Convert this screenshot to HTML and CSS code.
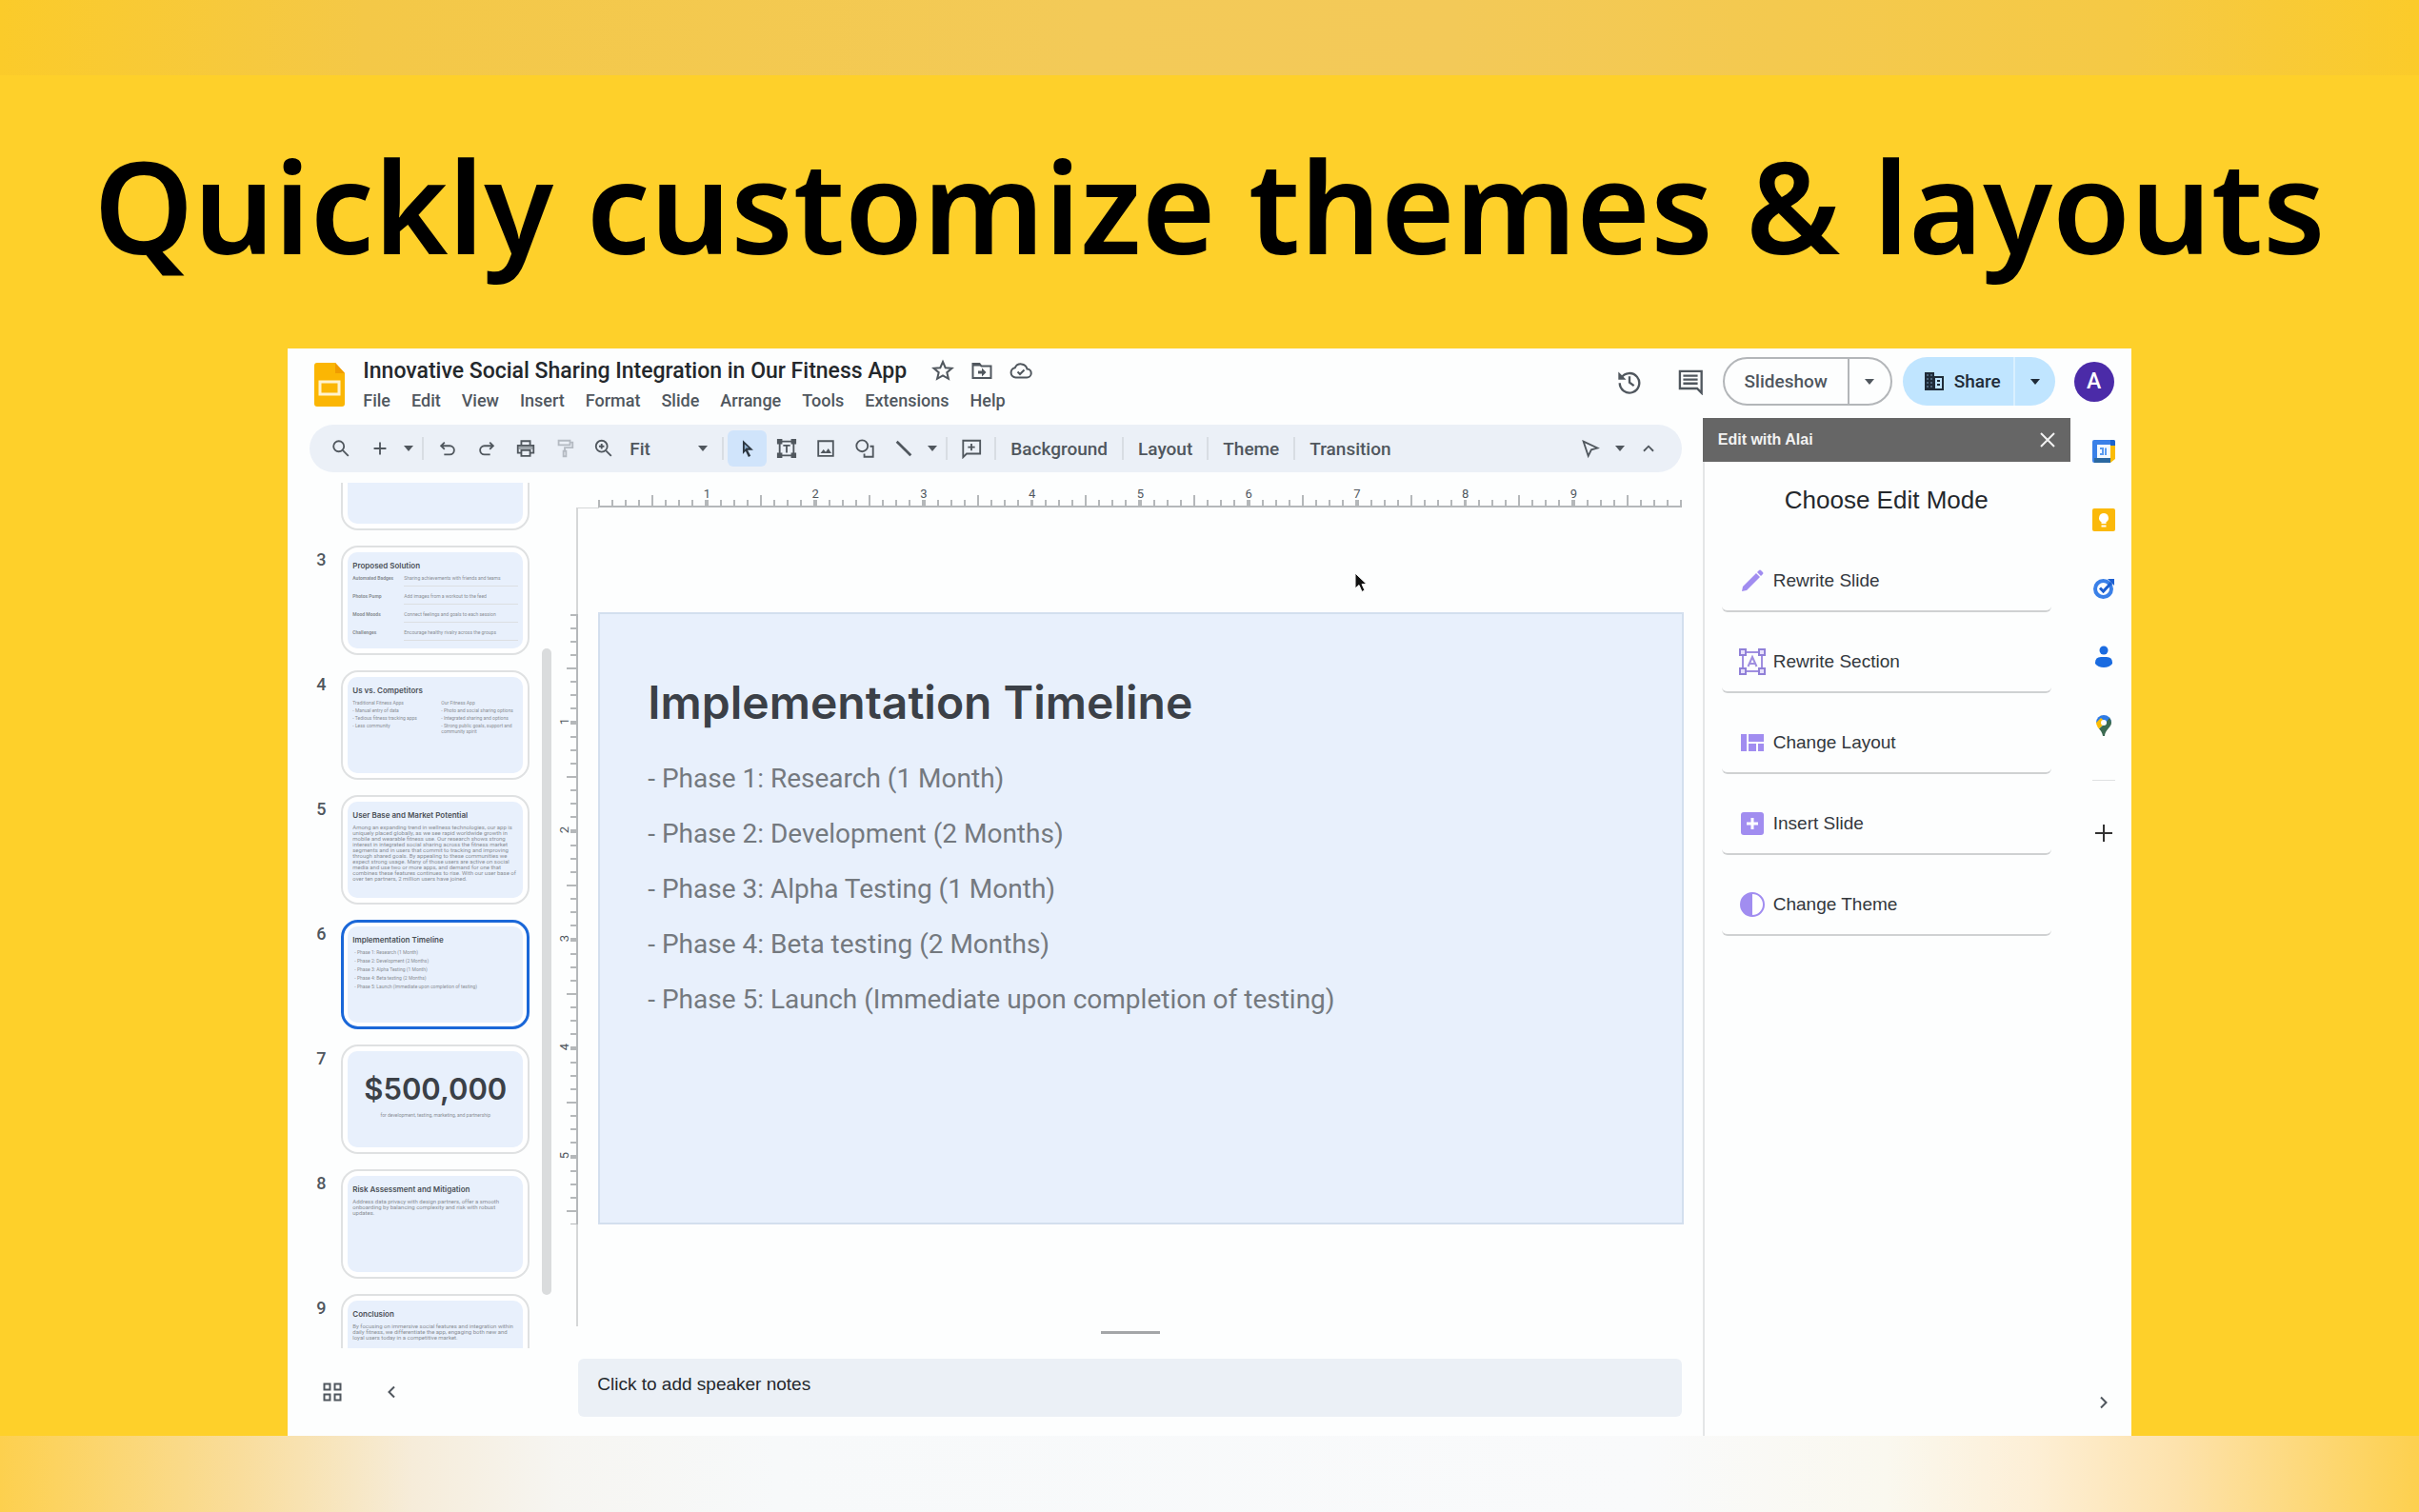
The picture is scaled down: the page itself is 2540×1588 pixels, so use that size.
FILE: index.html
```html
<!DOCTYPE html>
<html lang="en">
<head>
    <meta charset="UTF-8">
    <meta name="viewport" content="width=device-width, initial-scale=1.0">
    <title>Quickly customize themes & layouts</title>
    <link rel="stylesheet" href="styles.css">
</head>
<body>
    <svg class="sprite" aria-hidden="true">
        <symbol id="caret" viewBox="0 0 10 10"><path d="M0 2h10L5 8z" fill="currentColor"/></symbol>
    </svg>

    <div class="band band-top"></div>
    <h1 class="headline">Quickly customize themes &amp; layouts</h1>

    <div class="app">
        <header class="app-header">
            <svg class="logo" viewBox="0 0 32 46"><path d="M3 0h19l10 11v32a3 3 0 0 1-3 3H3a3 3 0 0 1-3-3V3a3 3 0 0 1 3-3z" fill="#fbb604"/><path d="M22 0l10 11H22z" fill="#f09c00"/><path d="M6 20h20v13H6z" fill="none" stroke="#fff3cf" stroke-width="3"/></svg>
            <div class="doc">
                <div class="doc-title">
                    <span class="doc-name">Innovative Social Sharing Integration in Our Fitness App</span>
                    <button class="mini" aria-label="Star"><svg viewBox="0 0 24 24"><path d="M12 3l2.700 6.200 6.800.6-5.200 4.400 1.600 6.600L12 17.300l-5.900 3.500 1.600-6.600-5.200-4.400 6.800-.6z" class="line"/></svg></button>
                    <button class="mini" aria-label="Move"><svg viewBox="0 0 24 24"><path d="M2.500 5h7l2 2.500h10V20h-19z" class="line"/><path d="M2.500 4.500h7l2 3h-9zM12 9.500l4.500 4.500-4.500 4.500v-3H8v-3h4z" fill="currentColor"/></svg></button>
                    <button class="mini" aria-label="Saved to Drive"><svg viewBox="0 0 24 24"><path d="M18.500 10.500A6.800 6.800 0 0 0 5.800 9.200 5.200 5.200 0 0 0 6.500 19.500H18a4.500 4.500 0 0 0 .5-9z" class="line"/><path d="M8.500 13.500l2.500 2.500 4.500-4.500" class="line"/></svg></button>
                </div>
                <nav class="menu">
                    <button>File</button>
                    <button>Edit</button>
                    <button>View</button>
                    <button>Insert</button>
                    <button>Format</button>
                    <button>Slide</button>
                    <button>Arrange</button>
                    <button>Tools</button>
                    <button>Extensions</button>
                    <button>Help</button>
                </nav>
            </div>
            <div class="actions">
                <button class="action-icon" aria-label="Version history"><svg viewBox="0 0 24 24"><path d="M4.500 8.500A8.800 8.800 0 1 1 3.200 13" class="line"/><path d="M2 3v7h7z" fill="currentColor"/><path d="M12 7v5.500l4 3" class="line"/></svg></button>
                <button class="action-icon" aria-label="Comments"><svg viewBox="0 0 24 24"><path d="M22 22l-4-4H2.500V2.500H22z" class="line"/><path d="M5.500 6.500h13M5.500 10h13M5.500 13.500h13" class="line"/></svg></button>
                <div class="split slideshow">
                    <button class="split-main">Slideshow</button>
                    <button class="split-caret" aria-label="Slideshow options"><svg class="caret"><use href="#caret"/></svg></button>
                </div>
                <div class="split share">
                    <button class="split-main"><svg viewBox="0 0 20 20"><path d="M0 0h10v4h10v15H0zM11 6v11h7V6z" fill="#1f2b38" fill-rule="evenodd"/><path d="M13 8h3v2h-3zM13 12h3v2h-3z" fill="#1f2b38"/><path d="M2 3h2M6 3h2M2 7h2M6 7h2M2 11h2M6 11h2M2 15h2M6 15h2" stroke="#7fa0bd" stroke-width="1"/></svg>Share</button>
                    <button class="split-caret" aria-label="Share options"><svg class="caret"><use href="#caret"/></svg></button>
                </div>
                <button class="avatar">A</button>
            </div>
        </header>

        <div class="app-body">
            <main class="editor">
                <div class="toolbar">
                    <button class="tool" aria-label="Search"><svg viewBox="0 0 24 24"><circle cx="9.500" cy="9.500" r="6" class="line"/><path d="M14 14l6.500 6.500" class="line"/></svg></button>
                    <button class="tool" aria-label="New slide"><svg viewBox="0 0 24 24"><path d="M12 5v14M5 12h14" class="line"/></svg></button>
                    <button class="tool-caret" aria-label="New slide options"><svg class="caret"><use href="#caret"/></svg></button>
                    <span class="sep"></span>
                    <button class="tool" aria-label="Undo"><svg viewBox="0 0 24 24"><path d="M8.500 5L4.500 9l4 4M5 9h9.500a5 5 0 0 1 0 10H8" class="line"/></svg></button>
                    <button class="tool" aria-label="Redo"><svg viewBox="0 0 24 24"><path d="M15.500 5l4 4-4 4M19 9H9.500a5 5 0 0 0 0 10H16" class="line"/></svg></button>
                    <button class="tool" aria-label="Print"><svg viewBox="0 0 24 24"><path d="M7 8V3.500h10V8M6.500 17H3V8.500h18V17h-3.500M7 14h10v6.500H7z" class="line"/><path d="M4 9h16v4H4z" fill="currentColor" opacity=".5"/></svg></button>
                    <button class="tool faded" aria-label="Paint format"><svg viewBox="0 0 24 24"><path d="M5 3h13v5H5zM18 5h3v6h-9v4M10.500 15h3v6h-3z" class="line"/></svg></button>
                    <button class="tool" aria-label="Zoom"><svg viewBox="0 0 24 24"><circle cx="9.500" cy="9.500" r="6.500" class="line"/><path d="M14.500 14.500l6 6M9.500 6.500v6M6.500 9.500h6" class="line"/></svg></button>
                    <label class="zoom">
                        <select aria-label="Zoom level"><option>Fit</option><option>50%</option><option>100%</option></select>
                        <svg class="caret"><use href="#caret"/></svg>
                    </label>
                    <span class="sep"></span>
                    <button class="tool active" aria-label="Select"><svg viewBox="0 0 24 24"><path d="M6.500 2.500l12 11.500h-6.500l3.500 6.500-2.500 1.200-3.300-6.700-3.200 3.500z" fill="#2c3640"/><path d="M8.500 7v6.500l2-2h3z" fill="#8fb0d0"/></svg></button>
                    <button class="tool" aria-label="Text box"><svg viewBox="0 0 24 24"><path d="M4 4h16v16H4z" class="line"/><path d="M1 1h6v6H1zM17 1h6v6h-6zM1 17h6v6H1zM17 17h6v6h-6z" fill="currentColor"/><path d="M8 8.500h8M12 8.500V17" class="line"/></svg></button>
                    <button class="tool" aria-label="Image"><svg viewBox="0 0 24 24"><path d="M3.500 3.500h17v17h-17z" class="line"/><path d="M6 17.500l3.500-4.500 2.500 3 3-4 3.500 5.500z" fill="currentColor"/></svg></button>
                    <button class="tool" aria-label="Shape"><svg viewBox="0 0 24 24"><circle cx="9" cy="9" r="6.500" class="line"/><path d="M18 9.500h3.500v12h-10V18" class="line"/></svg></button>
                    <button class="tool" aria-label="Line"><svg viewBox="0 0 24 24"><path d="M4 4l16 16" class="line thick"/></svg></button>
                    <button class="tool-caret" aria-label="Line options"><svg class="caret"><use href="#caret"/></svg></button>
                    <span class="sep"></span>
                    <button class="tool" aria-label="Add comment"><svg viewBox="0 0 24 24"><path d="M2.500 22V3h19.500v15H6.500z" class="line"/><path d="M12 6.500v8M8 10.500h8" class="line"/></svg></button>
                    <span class="sep"></span>
                    <button class="tool-text">Background</button>
                    <span class="sep"></span>
                    <button class="tool-text">Layout</button>
                    <span class="sep"></span>
                    <button class="tool-text">Theme</button>
                    <span class="sep"></span>
                    <button class="tool-text">Transition</button>
                    <div class="toolbar-end">
                        <button class="tool" aria-label="Mode"><svg viewBox="0 0 24 24"><path d="M4 4l16 7.500-7 2-3.500 7z" class="line"/></svg></button>
                        <button class="tool-caret" aria-label="Mode options"><svg class="caret"><use href="#caret"/></svg></button>
                        <button class="tool" aria-label="Hide menus"><svg viewBox="0 0 24 24"><path d="M6.500 15L12 9.500l5.500 5.500" class="line"/></svg></button>
                    </div>
                </div>

                <div class="workspace">
                    <aside class="filmstrip">
                        <div class="thumbs">
                            <ol class="thumb-list">
                                <li><span class="num"></span><div class="thumb"><div class="mini-slide"></div></div></li>
                                <li><span class="num">3</span><div class="thumb"><div class="mini-slide">
                                    <h3>Proposed Solution</h3>
                                    <dl>
                                        <dt>Automated Badges</dt><dd>Sharing achievements with friends and teams</dd>
                                        <dt>Photos Pump</dt><dd>Add images from a workout to the feed</dd>
                                        <dt>Mood Moods</dt><dd>Connect feelings and goals to each session</dd>
                                        <dt>Challenges</dt><dd>Encourage healthy rivalry across the groups</dd>
                                    </dl>
                                </div></div></li>
                                <li><span class="num">4</span><div class="thumb"><div class="mini-slide">
                                    <h3>Us vs. Competitors</h3>
                                    <div class="cols">
                                        <ul><li>Traditional Fitness Apps</li><li>- Manual entry of data</li><li>- Tedious fitness tracking apps</li><li>- Less community</li></ul>
                                        <ul><li>Our Fitness App</li><li>- Photo and social sharing options</li><li>- Integrated sharing and options</li><li>- Strong public goals, support and community spirit</li></ul>
                                    </div>
                                </div></div></li>
                                <li><span class="num">5</span><div class="thumb"><div class="mini-slide">
                                    <h3>User Base and Market Potential</h3>
                                    <p>Among an expanding trend in wellness technologies, our app is uniquely placed globally, as we see rapid worldwide growth in mobile and wearable fitness use. Our research shows strong interest in integrated social sharing across the fitness market segments and in users that commit to tracking and improving through shared goals. By appealing to these communities we expect strong usage. Many of those users are active on social media and use two or more apps, and demand for one that combines these features continues to rise. With our user base of over ten partners, 2 million users have joined.</p>
                                </div></div></li>
                                <li><span class="num">6</span><div class="thumb selected"><div class="mini-slide">
                                    <h3>Implementation Timeline</h3>
                                    <ul class="phases"><li>- Phase 1: Research (1 Month)</li><li>- Phase 2: Development (2 Months)</li><li>- Phase 3: Alpha Testing (1 Month)</li><li>- Phase 4: Beta testing (2 Months)</li><li>- Phase 5: Launch (Immediate upon completion of testing)</li></ul>
                                </div></div></li>
                                <li><span class="num">7</span><div class="thumb"><div class="mini-slide centered">
                                    <strong>$500,000</strong>
                                    <p>for development, testing, marketing, and partnership</p>
                                </div></div></li>
                                <li><span class="num">8</span><div class="thumb"><div class="mini-slide">
                                    <h3>Risk Assessment and Mitigation</h3>
                                    <p>Address data privacy with design partners, offer a smooth onboarding by balancing complexity and risk with robust updates.</p>
                                </div></div></li>
                                <li><span class="num">9</span><div class="thumb"><div class="mini-slide">
                                    <h3>Conclusion</h3>
                                    <p>By focusing on immersive social features and integration within daily fitness, we differentiate the app, engaging both new and loyal users today in a competitive market.</p>
                                </div></div></li>
                            </ol>
                            <div class="scrollbar"></div>
                        </div>
                        <div class="film-footer">
                            <button aria-label="Grid view"><svg viewBox="0 0 24 24"><path d="M3.500 3.500h6v6h-6zM14.500 3.500h6v6h-6zM3.500 14.500h6v6h-6zM14.500 14.500h6v6h-6z" class="line"/></svg></button>
                            <button aria-label="Hide filmstrip"><svg viewBox="0 0 24 24"><path d="M15 6.500L9.500 12l5.500 5.500" class="line"/></svg></button>
                        </div>
                    </aside>

                    <section class="canvas">
                        <div class="ruler-x"><span>1</span><span>2</span><span>3</span><span>4</span><span>5</span><span>6</span><span>7</span><span>8</span><span>9</span><span></span></div>
                        <div class="stage">
                            <div class="ruler-y"><span><b>1</b></span><span><b>2</b></span><span><b>3</b></span><span><b>4</b></span><span><b>5</b></span><span></span></div>
                            <article class="slide">
                                <h2>Implementation Timeline</h2>
                                <ul>
                                    <li>- Phase 1: Research (1 Month)</li>
                                    <li>- Phase 2: Development (2 Months)</li>
                                    <li>- Phase 3: Alpha Testing (1 Month)</li>
                                    <li>- Phase 4: Beta testing (2 Months)</li>
                                    <li>- Phase 5: Launch (Immediate upon completion of testing)</li>
                                </ul>
                            </article>
                            <svg class="pointer" viewBox="0 0 14 22"><path d="M1 1v16l4-3.500 3 7 3-1.500-3-6.500h5z" fill="#111" stroke="#fff"/></svg>
                        </div>
                        <div class="handle"><span></span></div>
                        <textarea class="notes" aria-label="Speaker notes" placeholder="Click to add speaker notes"></textarea>
                    </section>
                </div>
            </main>

            <aside class="sidebar">
                <div class="sidebar-header">
                    <span>Edit with Alai</span>
                    <button aria-label="Close"><svg viewBox="0 0 16 16"><path d="M1 1l14 14M15 1L1 15" stroke="#f2f2f2" stroke-width="2"/></svg></button>
                </div>
                <h2>Choose Edit Mode</h2>
                <div class="modes">
                    <button><svg viewBox="0 0 30 30"><path d="M4 26l1-5L19 7l4 4L9 25zM20 6l2-2q1-1 2 0l2 2q1 1 0 2l-2 2z" fill="#a18df0"/></svg>Rewrite Slide</button>
                    <button><svg viewBox="0 0 30 30"><path d="M5 5h20v20H5z" fill="none" stroke="#a08fe0" stroke-width="2"/><path d="M2 2h6v6H2zM22 2h6v6h-6zM2 22h6v6H2zM22 22h6v6h-6z" fill="#e6e0fb" stroke="#9080d8" stroke-width="2"/><path d="M10.500 20L15 10l4.500 10M12 17h6" fill="none" stroke="#a08fe0" stroke-width="2"/></svg>Rewrite Section</button>
                    <button><svg viewBox="0 0 30 30"><path d="M3 6h6v18H3zM11 6h16v8H11zM11 16h8v8h-8zM21 16h6v8h-6z" fill="#a18df0"/></svg>Change Layout</button>
                    <button><svg viewBox="0 0 30 30"><rect x="3" y="3" width="24" height="24" rx="3" fill="#a18df0"/><path d="M15 9v12M9 15h12" stroke="#fff" stroke-width="3"/></svg>Insert Slide</button>
                    <button><svg viewBox="0 0 30 30"><circle cx="15" cy="15" r="12" fill="#fff" stroke="#a18df0" stroke-width="2"/><path d="M15 3a12 12 0 0 0 0 24z" fill="#a18df0"/></svg>Change Theme</button>
                </div>
            </aside>

            <nav class="rail">
                <button aria-label="Calendar"><svg viewBox="0 0 24 24"><path d="M0 2q0-2 2-2h20q2 0 2 2v4H5v18H2q-2 0-2-2z" fill="#3a80e8"/><path d="M19 5h5v15l-5 4z" fill="#fbbc05"/><path d="M19 0h3q2 0 2 2v4h-5z" fill="#1a63cf"/><path d="M2 19h17v5H2z" fill="#2b68a0"/><path d="M5 5h14v14H5z" fill="#f4f9ff"/><path d="M8 9h3v6H8M14 8.500V16" fill="none" stroke="#5a9bf0" stroke-width="2"/></svg></button>
                <button aria-label="Keep"><svg viewBox="0 0 24 24"><rect width="24" height="24" rx="2" fill="#fbb90a"/><path d="M12 5a5 5 0 0 0-2.500 9.300V16h5v-1.700A5 5 0 0 0 12 5zM9.500 17.500h5v2h-5z" fill="#fff"/></svg></button>
                <button aria-label="Tasks"><svg viewBox="0 0 24 24"><circle cx="11.500" cy="12.500" r="8.500" fill="none" stroke="#3a80e8" stroke-width="4"/><path d="M16 2h7v7z" fill="#1c5fd0"/><path d="M8 11.500l3.500 3.500L20 6" fill="none" stroke="#1c5fd0" stroke-width="3"/></svg></button>
                <button aria-label="Contacts"><svg viewBox="0 0 24 24"><circle cx="12" cy="5" r="4.500" fill="#1a6be0"/><path d="M3 18q0-6 6-6h6q6 0 6 6v1q-3 4-9 4t-9-4z" fill="#1a6be0"/></svg></button>
                <button aria-label="Maps"><svg viewBox="0 0 24 24"><path d="M12 1a8 8 0 0 1 8 8H4a8 8 0 0 1 8-8z" fill="#2f7be5"/><path d="M4 9q0 3 3 6.500l7-7L9 4z" fill="#fbbc05"/><path d="M20 9c0 5-6.500 7-7 14h-2c-.5-3.500-2-5.500-4-7.500l7-6.500 4-5q2 2 2 5z" fill="#3c6b52"/><circle cx="12" cy="9" r="3" fill="#fff"/></svg></button>
                <span class="rail-line"></span>
                <button aria-label="Get add-ons"><svg viewBox="0 0 24 24"><path d="M12 3v18M3 12h18" stroke="#333" stroke-width="2"/></svg></button>
                <button class="rail-toggle" aria-label="Hide side panel"><svg viewBox="0 0 24 24"><path d="M9 6.500l5.500 5.500L9 17.500" class="line"/></svg></button>
            </nav>
        </div>
    </div>

    <div class="band band-bottom"></div>
</body>
</html>
```
FILE: styles.css
```css
* {
    box-sizing: border-box;
}
body {
    margin: 0;
    min-height: 100vh;
    display: flex;
    flex-direction: column;
    background: #fed02a;
    font-family: Roboto, sans-serif;
    color: #50575e;
}
button {
    padding: 0;
    border: none;
    background: none;
    font: inherit;
    color: inherit;
    cursor: pointer;
}
ul, ol, dl, h1, h2, h3, p {
    margin: 0;
    padding: 0;
    list-style: none;
}
svg {
    display: block;
}
.sprite {
    display: none;
}
.line {
    fill: none;
    stroke: currentColor;
    stroke-width: 2;
}
.thick {
    stroke-width: 3;
}
.caret {
    width: 10px;
    height: 10px;
}

/* page frame */
.band {
    flex: none;
    height: 79px;
}
.band-top {
    background: linear-gradient(to right, #fbcb2a, #f4c847 15%, #f3ca58 45%, #f3c958 60%, #f5c945 88%, #fbcb2a);
}
.band-bottom {
    height: 80px;
    background: linear-gradient(to right, #fdd04e, #f9dd9c 10%, #f6ecd9 17%, #f6f5f1 23%, #f7f9fa 32%, #f9fafb 68%, #faf8ef 78%, #fdefd6 84%, #fde2ac 90%, #fdd04e);
}
.headline {
    height: 287px;
    line-height: 274px;
    text-align: center;
    white-space: nowrap;
    font-family: "Noto Sans", sans-serif;
    font-size: 133px;
    font-weight: 600;
    color: #000;
}
.app {
    flex: 1;
    width: 76.2%;
    margin: 0 auto;
    display: flex;
    flex-direction: column;
    background: #fdfefe;
}

/* header */
.app-header {
    display: flex;
    height: 73px;
    padding: 0 18px 0 28px;
}
.logo {
    width: 32px;
    height: 46px;
    margin-top: 15px;
}
.doc {
    margin: 7px 0 0 19px;
}
.doc-title {
    display: flex;
    align-items: center;
    gap: 17px;
    height: 32px;
    font-size: 23px;
    font-weight: 500;
    color: #24282c;
}
.doc-name {
    margin-right: 9px;
}
.mini {
    color: #50575e;
}
.mini svg {
    width: 24px;
    height: 24px;
}
.menu {
    display: flex;
    gap: 22px;
    height: 30px;
    font-size: 18px;
    font-weight: 500;
}
.actions {
    display: flex;
    align-items: center;
    height: 51px;
    margin: 9px 0 0 auto;
}
.action-icon {
    margin-right: 36px;
}
.action-icon svg {
    width: 28px;
    height: 28px;
}
.action-icon + .action-icon {
    margin-right: 20px;
}
.split {
    display: flex;
    height: 51px;
    border-radius: 26px;
    font-size: 19px;
    font-weight: 500;
}
.split-main {
    display: flex;
    align-items: center;
    justify-content: center;
    gap: 11px;
}
.split-caret {
    display: flex;
    align-items: center;
    justify-content: center;
    flex: 1;
}
.slideshow {
    width: 178px;
    margin-right: 11px;
    border: 2px solid #b3b6b9;
}
.slideshow .split-main {
    width: 131px;
    border-right: 2px solid #b3b6b9;
}
.share {
    width: 160px;
    margin-right: 20px;
    background: #c0e5ff;
    color: #1f2b38;
}
.share .split-main {
    width: 118px;
    padding-left: 10px;
    border-right: 2px solid #d9f0ff;
}
.share .split-main svg {
    width: 20px;
    height: 20px;
}
.avatar {
    width: 42px;
    height: 42px;
    border-radius: 50%;
    background: #4b2ba8;
    color: #fff;
    font-size: 23px;
    font-weight: 500;
}

/* editor */
.app-body {
    flex: 1;
    display: flex;
}
.editor {
    flex: 1;
    display: flex;
    flex-direction: column;
}
.toolbar {
    display: flex;
    align-items: center;
    height: 50px;
    margin: 7px 22px 0 23px;
    padding: 0 14px 0 12px;
    border-radius: 25px;
    background: #ebf0f7;
    font-size: 19px;
    font-weight: 500;
}
.tool {
    display: flex;
    align-items: center;
    justify-content: center;
    width: 41px;
    height: 38px;
}
.tool svg {
    width: 22px;
    height: 22px;
}
.faded {
    color: #b4bac2;
}
.active {
    border-radius: 6px;
    background: #d0e4fb;
}
.tool-caret {
    width: 20px;
    height: 38px;
    display: flex;
    align-items: center;
    justify-content: center;
}
.sep {
    width: 2px;
    height: 24px;
    margin: 0 4px;
    background: #d8dde3;
}
.zoom {
    display: flex;
    align-items: center;
    width: 100px;
    padding: 0 11px 0 7px;
}
.zoom select {
    flex: 1;
    padding: 0;
    border: none;
    appearance: none;
    background: none;
    font: inherit;
    color: inherit;
}
.tool-text {
    padding: 0 11px;
}
.toolbar-end {
    display: flex;
    margin-left: auto;
}
.workspace {
    flex: 1;
    display: flex;
}

/* filmstrip */
.filmstrip {
    display: flex;
    flex-direction: column;
    width: 277px;
    padding-top: 11px;
}
.thumbs {
    flex: 1 1 0;
    display: flex;
    justify-content: space-between;
    overflow: hidden;
}
.thumb-list {
    height: 0;
    margin-top: -65px;
    padding-left: 30px;
}
.thumb-list > li {
    display: flex;
    height: 115px;
    margin-bottom: 16px;
}
.num {
    width: 26px;
    padding-top: 4px;
    font-size: 18px;
    font-weight: 500;
}
.thumb {
    width: 198px;
    padding: 5px;
    border: 2px solid #dfe1e2;
    border-radius: 18px;
    background: #fff;
}
.selected {
    border: 3px solid #1a67d8;
    padding: 4px;
}
.mini-slide {
    height: 100%;
    padding: 9px 5px;
    border-radius: 10px;
    background: #e8f0fc;
    overflow: hidden;
    font-size: 6px;
    line-height: 6px;
    color: #8a8f95;
}
.mini-slide h3 {
    margin-bottom: 5px;
    font-family: Inter, sans-serif;
    font-size: 8px;
    line-height: 10px;
    font-weight: 600;
    white-space: nowrap;
    color: #4b5057;
}
.mini-slide dl {
    display: grid;
    grid-template-columns: 54px 1fr;
}
.mini-slide dt, .mini-slide dd {
    height: 19px;
    margin: 0;
    white-space: nowrap;
    font-size: 5px;
}
.mini-slide dt {
    font-weight: 700;
}
.mini-slide dd {
    border-bottom: 1px solid #dcdfe2;
    height: 12px;
}
.cols {
    display: grid;
    grid-template-columns: 1fr 81px;
    gap: 12px;
    font-size: 5px;
}
.cols li {
    min-height: 8px;
}
.phases {
    font-size: 5px;
}
.phases li {
    height: 9px;
    padding-left: 2px;
}
.centered {
    text-align: center;
    padding-top: 24px;
}
.centered strong {
    display: block;
    font-family: Inter, sans-serif;
    font-size: 31px;
    line-height: 32px;
    font-weight: 600;
    color: #3b4047;
}
.centered p {
    margin-top: 8px;
    font-size: 5px;
}
.scrollbar {
    width: 10px;
    margin: 174px 0 56px;
    border-radius: 5px;
    background: #dadcdd;
}
.film-footer {
    display: flex;
    gap: 38px;
    height: 92px;
    padding: 0 35px;
    align-items: center;
}
.film-footer svg {
    width: 24px;
    height: 24px;
}

/* canvas */
.canvas {
    flex: 1;
    display: flex;
    flex-direction: column;
    padding-top: 11px;
}
.ruler-x {
    display: flex;
    height: 26px;
    margin: 0 22px 0 49px;
    border-bottom: 2px solid #b5b8ba;
    font-size: 13px;
    line-height: 24px;
}
.ruler-x span {
    flex: 1;
    display: flex;
    justify-content: flex-end;
    margin-right: -4px;
    padding-left: 4px;
    background:
        linear-gradient(#b5b8ba, #b5b8ba) 56px 100% / 2px 11px no-repeat,
        repeating-linear-gradient(to right, #b5b8ba 0 2px, transparent 2px 14px) 0 100% / 100% 6px no-repeat;
}
.stage {
    flex: 1;
    display: flex;
    align-items: center;
    position: relative;
    padding-right: 20px;
    background:
        linear-gradient(#d5d7d8, #d5d7d8) 26px 0 / 2px 100% no-repeat,
        linear-gradient(#d5d7d8, #d5d7d8) 26px 0 / 24px 1px no-repeat;
}
.ruler-y {
    width: 28px;
    height: 641px;
    margin-top: 4px;
    overflow: hidden;
    border-right: 2px solid #b5b8ba;
    font-size: 13px;
    line-height: 14px;
}
.ruler-y span {
    display: flex;
    align-items: flex-end;
    height: 114px;
    padding-left: 7px;
    background:
        linear-gradient(#b5b8ba, #b5b8ba) 100% 56px / 10px 2px no-repeat,
        repeating-linear-gradient(to bottom, #b5b8ba 0 2px, transparent 2px 14px) 100% 0 / 6px 100% no-repeat;
}
.ruler-y b {
    margin-bottom: -3px;
    font-weight: 400;
    writing-mode: vertical-rl;
    transform: rotate(180deg);
}
.slide {
    flex: 1;
    aspect-ratio: 1139 / 643;
    margin: 3px 0 0 21px;
    padding: 64px 50px;
    border: 2px solid #d3dfee;
    background: #e8f0fc;
}
.slide h2 {
    margin-bottom: 22px;
    font-family: Inter, sans-serif;
    font-size: 48px;
    line-height: 58px;
    font-weight: 600;
    color: #3b4047;
}
.slide li {
    font-size: 28px;
    line-height: 58px;
    color: #74797f;
}
.pointer {
    position: absolute;
    left: 843px;
    top: 68px;
    width: 14px;
    height: 22px;
}
.handle {
    height: 34px;
    padding: 5px 22px 0 28px;
}
.handle span {
    display: block;
    width: 62px;
    height: 3px;
    margin: 0 auto;
    background: #a4a6a8;
}
.notes {
    display: block;
    height: 61px;
    margin: 0 22px 20px 28px;
    padding: 16px 20px;
    border: none;
    border-radius: 6px;
    resize: none;
    background: #ebf0f6;
    font-family: "Liberation Sans", sans-serif;
    font-size: 19px;
    line-height: 22px;
}
.notes::placeholder {
    color: #24282c;
}

/* add-on panel */
.sidebar {
    width: 386px;
    border-left: 2px solid #e4e6e7;
    font-family: "Liberation Sans", sans-serif;
}
.sidebar-header {
    display: flex;
    align-items: center;
    justify-content: space-between;
    height: 46px;
    margin-left: -2px;
    padding: 0 16px;
    background: #666;
    font-size: 16px;
    font-weight: 700;
    color: #f2f2f2;
}
.sidebar-header svg {
    width: 16px;
    height: 16px;
}
.sidebar h2 {
    margin: 25px 2px 39px 0;
    text-align: center;
    font-size: 26px;
    line-height: 30px;
    font-weight: 400;
    color: #24282c;
}
.modes {
    display: grid;
    gap: 21px;
    padding: 0 20px 0 18px;
}
.modes button {
    display: flex;
    align-items: center;
    gap: 7px;
    height: 64px;
    padding-left: 17px;
    border-bottom: 2px solid #cfd1d2;
    border-radius: 6px;
    font-size: 19px;
    color: #33383d;
}
.modes svg {
    width: 30px;
    height: 30px;
}
.rail {
    display: flex;
    flex-direction: column;
    align-items: center;
    gap: 48px;
    width: 64px;
    padding: 23px 0 23px 6px;
}
.rail svg {
    width: 24px;
    height: 24px;
}
.rail-line {
    width: 24px;
    height: 1px;
    margin: -3px 0 -5px;
    background: #dfe1e2;
}
.rail-toggle {
    margin-top: auto;
}
```
